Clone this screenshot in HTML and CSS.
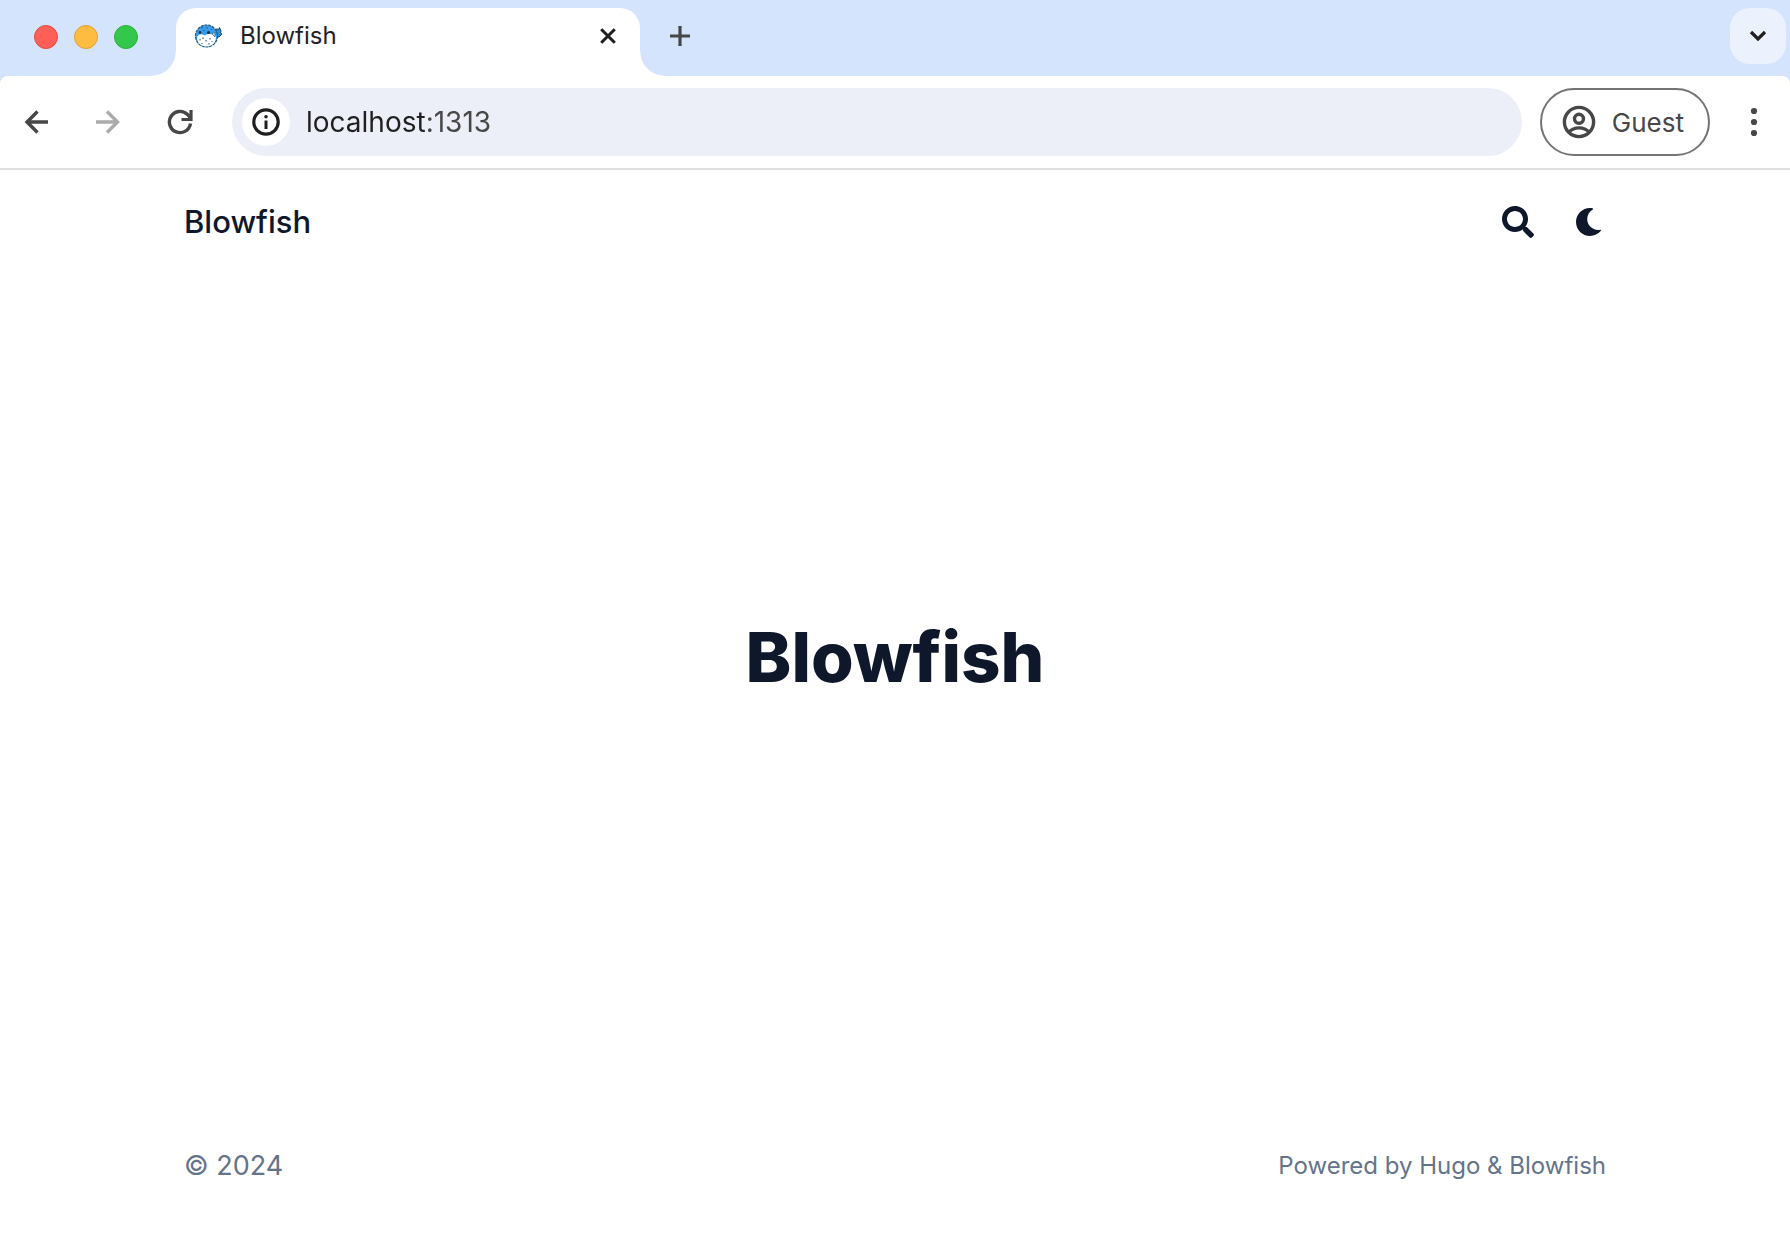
FILE: index.html
```html
<!DOCTYPE html>
<html lang="en">
<head>
<meta charset="utf-8">
<meta name="viewport" content="width=device-width, initial-scale=1">
<title>Blowfish</title>
<link rel="stylesheet" href="styles.css">
</head>
<body>
<div class="browser">
  <div class="chrome">
    <div class="tab-strip">
      <div class="window-controls">
        <button class="light light-close" aria-label="Close window"></button>
        <button class="light light-minimize" aria-label="Minimize window"></button>
        <button class="light light-zoom" aria-label="Zoom window"></button>
      </div>
      <div class="tab">
        <svg class="favicon" viewBox="0 0 28 24" aria-hidden="true">
          <path d="M22 9l1-4.500 1.500 1.500 1-2.500 1.500 3.500-.5 2 1.500 1-3 3-3-.5z" fill="#2b8fdc" stroke="#1d4a66" stroke-width="1"/>
          <circle cx="12.500" cy="12" r="11" fill="#3a9cec" stroke="#265c7c" stroke-width="1.200" stroke-dasharray="3 .8"/>
          <path d="M3 13c2-4 5-3 8-1.500 3-2 9-2 11 1 0 6.500-4 10-9.500 10S3 19 3 13z" fill="#fff"/>
          <circle cx="6" cy="8.500" r="1.400" fill="#17364b"/>
          <circle cx="14.500" cy="8.500" r="1.600" fill="#17364b"/>
          <path d="M18 10l3-2v5z" fill="#c8dce8" stroke="#265c7c" stroke-width=".6"/>
          <path d="M8 3v1.500M13 3v1.500M18 5l-.5 1M10 6v1M6 15v1.500M9 13.500V15M12 16v1.500M16 14v1.500M8 19v1M15 19v1.500M18 17v1" stroke="#24516c" stroke-width="1"/>
        </svg>
        <span class="tab-title">Blowfish</span>
        <button class="tab-close" aria-label="Close tab">
          <svg width="16" height="16" viewBox="0 0 16 16"><path d="M1.200 1.200l13.600 13.600M14.800 1.200L1.200 14.800" stroke="#1f1f1f" stroke-width="3"/></svg>
        </button>
      </div>
      <button class="new-tab" aria-label="New tab">
        <svg width="20" height="20" viewBox="0 0 20 20"><path d="M10 0v20M0 10h20" stroke="#474747" stroke-width="3.200"/></svg>
      </button>
      <button class="tab-search" aria-label="Search tabs">
        <svg width="18" height="12" viewBox="0 0 18 12"><path d="M2 2l7 7 7-7" fill="none" stroke="#1f1f1f" stroke-width="3.200"/></svg>
      </button>
    </div>

    <div class="toolbar">
      <div class="nav-buttons">
        <button class="tool" aria-label="Back">
          <svg width="24" height="24" viewBox="0 0 24 24"><path d="M24 12H3M13.500 1.500L3 12l10.500 10.500" fill="none" stroke="#474747" stroke-width="3.400"/></svg>
        </button>
        <button class="tool" aria-label="Forward" disabled>
          <svg width="24" height="24" viewBox="0 0 24 24"><path d="M0 12h21.500M11 1.500L21.500 12 11 22.500" fill="none" stroke="#ababab" stroke-width="3.400"/></svg>
        </button>
        <button class="tool" aria-label="Reload">
          <svg width="26" height="26" viewBox="0 0 26 26"><path d="M23.500 14.500A10.600 10.600 0 1 1 20.500 5.500l3 3.500" fill="none" stroke="#474747" stroke-width="3.400"/><path d="M24 1v9.500H14.500" fill="none" stroke="#474747" stroke-width="3.200"/></svg>
        </button>
      </div>
      <div class="omnibox">
        <button class="site-info" aria-label="View site information">
          <svg width="28" height="28" viewBox="0 0 28 28"><circle cx="14" cy="14" r="12.200" fill="none" stroke="#1f1f1f" stroke-width="3.200"/><circle cx="14" cy="8.700" r="1.800" fill="#1f1f1f"/><path d="M14 12.500v8.500" stroke="#1f1f1f" stroke-width="3"/></svg>
        </button>
        <input class="url" type="text" value="localhost:1313" aria-label="Address and search bar" spellcheck="false">
      </div>
      <button class="profile">
        <svg width="34" height="34" viewBox="0 0 34 34" fill="none" stroke="#474747" stroke-width="3.400" aria-hidden="true"><circle cx="17" cy="17" r="14.600"/><circle cx="17" cy="13.800" r="4.500"/><path d="M7 27c5-5.500 15-5.500 20 0"/></svg>
        Guest
      </button>
      <button class="menu" aria-label="Menu">
        <svg width="8" height="30" viewBox="0 0 8 30" fill="#474747"><circle cx="4" cy="4" r="3.100"/><circle cx="4" cy="15" r="3.100"/><circle cx="4" cy="26" r="3.100"/></svg>
      </button>
    </div>
  </div>

  <div class="page">
    <header class="site-header">
      <a class="site-name" href="#">Blowfish</a>
      <div class="site-actions">
        <button class="action" aria-label="Search">
          <svg width="32" height="32" viewBox="0 0 512 512"><path fill="#0f172a" d="M505 442.700L405.300 343c-4.500-4.500-10.600-7-17-7H372c27.600-35.300 44-79.700 44-128C416 93.100 322.900 0 208 0S0 93.100 0 208s93.100 208 208 208c48.300 0 92.700-16.400 128-44v16.300c0 6.400 2.500 12.500 7 17l99.700 99.700c9.400 9.400 24.600 9.400 33.900 0l28.300-28.300c9.400-9.400 9.400-24.600.1-34zM208 336c-70.700 0-128-57.200-128-128 0-70.700 57.200-128 128-128 70.700 0 128 57.200 128 128 0 70.700-57.200 128-128 128z"/></svg>
        </button>
        <button class="action" aria-label="Switch to dark mode">
          <svg width="32" height="32" viewBox="0 0 512 512"><path fill="#0f172a" d="M32 256C32 132.200 132.300 32 255.800 32c11.360 0 29.700 1.668 40.900 3.746 9.616 1.777 11.750 14.630 3.279 19.440C245 86.500 211.200 144.600 211.200 207.800c0 109.700 99.710 193 208.300 172.300 9.561-1.805 16.280 9.324 10.110 16.950C387.900 448.600 324.800 480 255.800 480 132.100 480 32 379.600 32 256z"/></svg>
        </button>
      </div>
    </header>
    <main class="hero"><h1>Blowfish</h1></main>
    <footer class="site-footer">
      <p class="copyright">© 2024</p>
      <p class="credit">Powered by <a href="#">Hugo</a> &amp; <a href="#">Blowfish</a></p>
    </footer>
  </div>
</div>
</body>
</html>
```
FILE: styles.css
```css
* { box-sizing: border-box; }

body {
  margin: 0;
  background: #fff;
  color: #1f1f1f;
  font-family: Inter, "Liberation Sans", sans-serif;
}

button {
  display: flex;
  align-items: center;
  justify-content: center;
  margin: 0;
  padding: 0;
  border: 0;
  background: none;
  color: inherit;
  font: inherit;
}

a { color: inherit; text-decoration: none; }

.browser {
  display: flex;
  flex-direction: column;
  min-height: 100vh;
}

.chrome { background: #d4e4fd; }

/* Tab strip */
.tab-strip {
  display: flex;
  height: 76px;
  padding: 8px 4px 0 34px;
}

.window-controls {
  display: flex;
  gap: 16px;
  padding-top: 17px;
  width: 142px;
}

.light {
  width: 24px;
  height: 24px;
  border: 1px solid;
  border-radius: 50%;
}
.light-close { background: #ff5f57; border-color: #e24b41; }
.light-minimize { background: #febc40; border-color: #e0a137; }
.light-zoom { background: #33c84b; border-color: #2dae3a; }

.tab {
  position: relative;
  display: flex;
  align-items: center;
  width: 464px;
  height: 68px;
  padding: 0 20px 12px 18px;
  border-radius: 20px 20px 0 0;
  background: #fff;
}

/* Flared feet of the active tab */
.tab::before,
.tab::after {
  content: "";
  position: absolute;
  bottom: 0;
  width: 24px;
  height: 24px;
}
.tab::before {
  right: 100%;
  background: radial-gradient(circle at 0 0, #d4e4fd 23px, #fff 24px);
}
.tab::after {
  left: 100%;
  background: radial-gradient(circle at 100% 0, #d4e4fd 23px, #fff 24px);
}

.favicon { width: 28px; height: 24px; }
.tab-title { flex: 1; margin-left: 18px; font-size: 24px; line-height: 28px; }
.tab-close { width: 24px; height: 24px; }
.new-tab { width: 56px; height: 56px; margin-left: 12px; }

.tab-search {
  width: 56px;
  height: 56px;
  margin-left: auto;
  border-radius: 20px;
  background: #ebf2fe;
}

/* Toolbar */
.toolbar {
  display: flex;
  align-items: center;
  height: 94px;
  padding: 0 24px 0 12px;
  border-bottom: 2px solid #e0e0e0;
  border-radius: 8px 8px 0 0;
  background: #fff;
}

.nav-buttons { display: flex; gap: 24px; }
.tool { width: 48px; height: 48px; }

.omnibox {
  display: flex;
  flex: 1;
  align-items: center;
  height: 68px;
  margin-left: 28px;
  padding: 0 10px;
  border-radius: 34px;
  background: #eceef8;
}

.site-info {
  width: 48px;
  height: 48px;
  border-radius: 50%;
  background: #fff;
}

.url {
  flex: 1;
  min-width: 0;
  margin-left: 16px;
  padding: 0;
  border: 0;
  outline: 0;
  /* The port is drawn lighter than the host */
  background: linear-gradient(90deg, #1f1f1f 121px, #474747 121px) text;
  color: #1f1f1f;
  -webkit-text-fill-color: transparent;
  font: inherit;
  font-size: 28px;
  line-height: 36px;
}

.profile {
  gap: 16px;
  height: 68px;
  margin-left: 18px;
  padding: 0 24px 0 20px;
  border: 2px solid #747474;
  border-radius: 34px;
  color: #474747;
  font-size: 26px;
}

.menu { width: 40px; height: 48px; margin-left: 24px; margin-right: -8px; }

/* Site */
.page {
  display: flex;
  flex: 1;
  flex-direction: column;
  padding: 0 184px;
  color: #0f172a;
}

.site-header {
  display: flex;
  align-items: center;
  justify-content: space-between;
  height: 104px;
}
.site-name { font-size: 31px; font-weight: 500; line-height: 40px; }
.site-actions { display: flex; gap: 40px; }

.hero {
  display: flex;
  flex: 1;
  align-items: center;
  justify-content: center;
  padding-bottom: 66px;
}
.hero h1 { margin: 0; font-size: 69px; font-weight: 800; line-height: 80px; }

.site-footer {
  display: flex;
  align-items: center;
  justify-content: space-between;
  padding: 40px 0 68px;
  color: #64748b;
}
.site-footer p { margin: 0; line-height: 40px; }
.copyright { font-size: 27px; }
.credit { font-size: 24px; }
```
